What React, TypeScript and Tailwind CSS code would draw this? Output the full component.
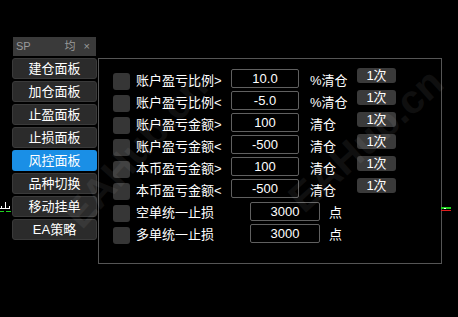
const font = { fontFamily: '"Liberation Sans", "Noto Sans CJK SC", sans-serif' };

const menu = ["建仓面板", "加仓面板", "止盈面板", "止损面板", "风控面板", "品种切换", "移动挂单", "EA策略"];

const riskRows = [
  { label: "账户盈亏比例>", value: "10.0", unit: "%清仓" },
  { label: "账户盈亏比例<", value: "-5.0", unit: "%清仓" },
  { label: "账户盈亏金额>", value: "100", unit: "清仓" },
  { label: "账户盈亏金额<", value: "-500", unit: "清仓" },
  { label: "本币盈亏金额>", value: "100", unit: "清仓" },
  { label: "本币盈亏金额<", value: "-500", unit: "清仓" },
];

const stopRows = [
  { label: "空单统一止损", value: "3000" },
  { label: "多单统一止损", value: "3000" },
];

function Check() {
  return <div className="mt-[5px] h-[17px] w-[17px] shrink-0 rounded-[3px] bg-[#363636]" />;
}

export default function App() {
  return (
    <div className="relative h-[317px] w-[458px] overflow-hidden bg-black text-white" style={font}>
      {/* chart bits peeking out behind the panels */}
      <svg className="absolute left-0 top-[200px]" width="12" height="14" viewBox="0 0 12 14">
        <rect x="5" y="2" width="1" height="7" fill="#fff" />
        <rect x="0" y="8" width="10" height="1" fill="#fff" />
        <rect x="1" y="6" width="1" height="3" fill="#fff" />
        <rect x="9" y="6" width="1" height="3" fill="#fff" />
        <rect x="0" y="11" width="4" height="1" fill="#1ed31e" />
        <rect x="6" y="11" width="5" height="1" fill="#1ed31e" />
      </svg>
      <svg className="absolute left-[441px] top-[207px]" width="10" height="6" viewBox="0 0 10 6">
        <rect x="0" y="0" width="10" height="2" fill="#1ed31e" />
        <rect x="3" y="1" width="2" height="1" fill="#fff" />
        <rect x="0" y="3" width="10" height="1" fill="#e01e1e" />
      </svg>

      <div className="flex items-start pl-[12px] pt-[37px]">
        <div className="flex w-[85px] flex-col">
          <div className="ml-[1px] flex h-[19px] w-[83px] items-center bg-[#3a3a3a] pl-[3px] pr-[6px] text-[11px] text-[#9a9a9a]">
            <span>SP</span>
            <span className="ml-auto">均</span>
            <span className="ml-[8px]">×</span>
          </div>
          <div className="mt-[2px] flex flex-col gap-[2px]">
            {menu.map((m) => (
              <div
                key={m}
                className={
                  m === "风控面板"
                    ? "flex h-[21px] items-center justify-center rounded-[3px] bg-[#1a8fe6] text-[13px]"
                    : "flex h-[21px] items-center justify-center rounded-[3px] border border-[#3a3a3a] bg-[#2b2b2b] text-[13px]"
                }
              >
                {m}
              </div>
            ))}
          </div>
        </div>

        <div className="ml-[1px] mt-[21px] h-[206px] w-[344px] border border-[#555] pl-[14px] pt-[9px] text-[13px]">
          {riskRows.map((r) => (
            <div key={r.label} className="flex h-[22px] items-start">
              <Check />
              <div className="ml-[6px] mt-[4px] w-[95px] leading-[18px]">{r.label}</div>
              <div className="mt-[1px] flex h-[19px] w-[68px] items-center justify-center rounded-[2px] border border-[#606060]">
                {r.value}
              </div>
              <div className="ml-[11px] mt-[4px] w-[47px] leading-[18px]">{r.unit}</div>
              <div className="flex h-[15px] w-[39px] items-center justify-center rounded-[3px] bg-[#3a3a3a]">1次</div>
            </div>
          ))}
          {stopRows.map((r) => (
            <div key={r.label} className="flex h-[22px] items-start">
              <Check />
              <div className="ml-[6px] mt-[4px] w-[114px] leading-[18px]">{r.label}</div>
              <div className="mt-[2px] flex h-[19px] w-[70px] items-center justify-center rounded-[2px] border border-[#606060]">
                {r.value}
              </div>
              <div className="ml-[9px] mt-[4px] leading-[18px]">点</div>
            </div>
          ))}
        </div>
      </div>

      {/* watermark */}
      <div className="pointer-events-none absolute left-[40px] top-[120px] -rotate-[48deg] text-[40px] font-bold text-white opacity-[0.06]">
        EAHub.cn
      </div>
      <div className="pointer-events-none absolute left-[270px] top-[110px] -rotate-[42deg] text-[40px] font-bold text-white opacity-[0.06]">
        EAHub.cn
      </div>
    </div>
  );
}
